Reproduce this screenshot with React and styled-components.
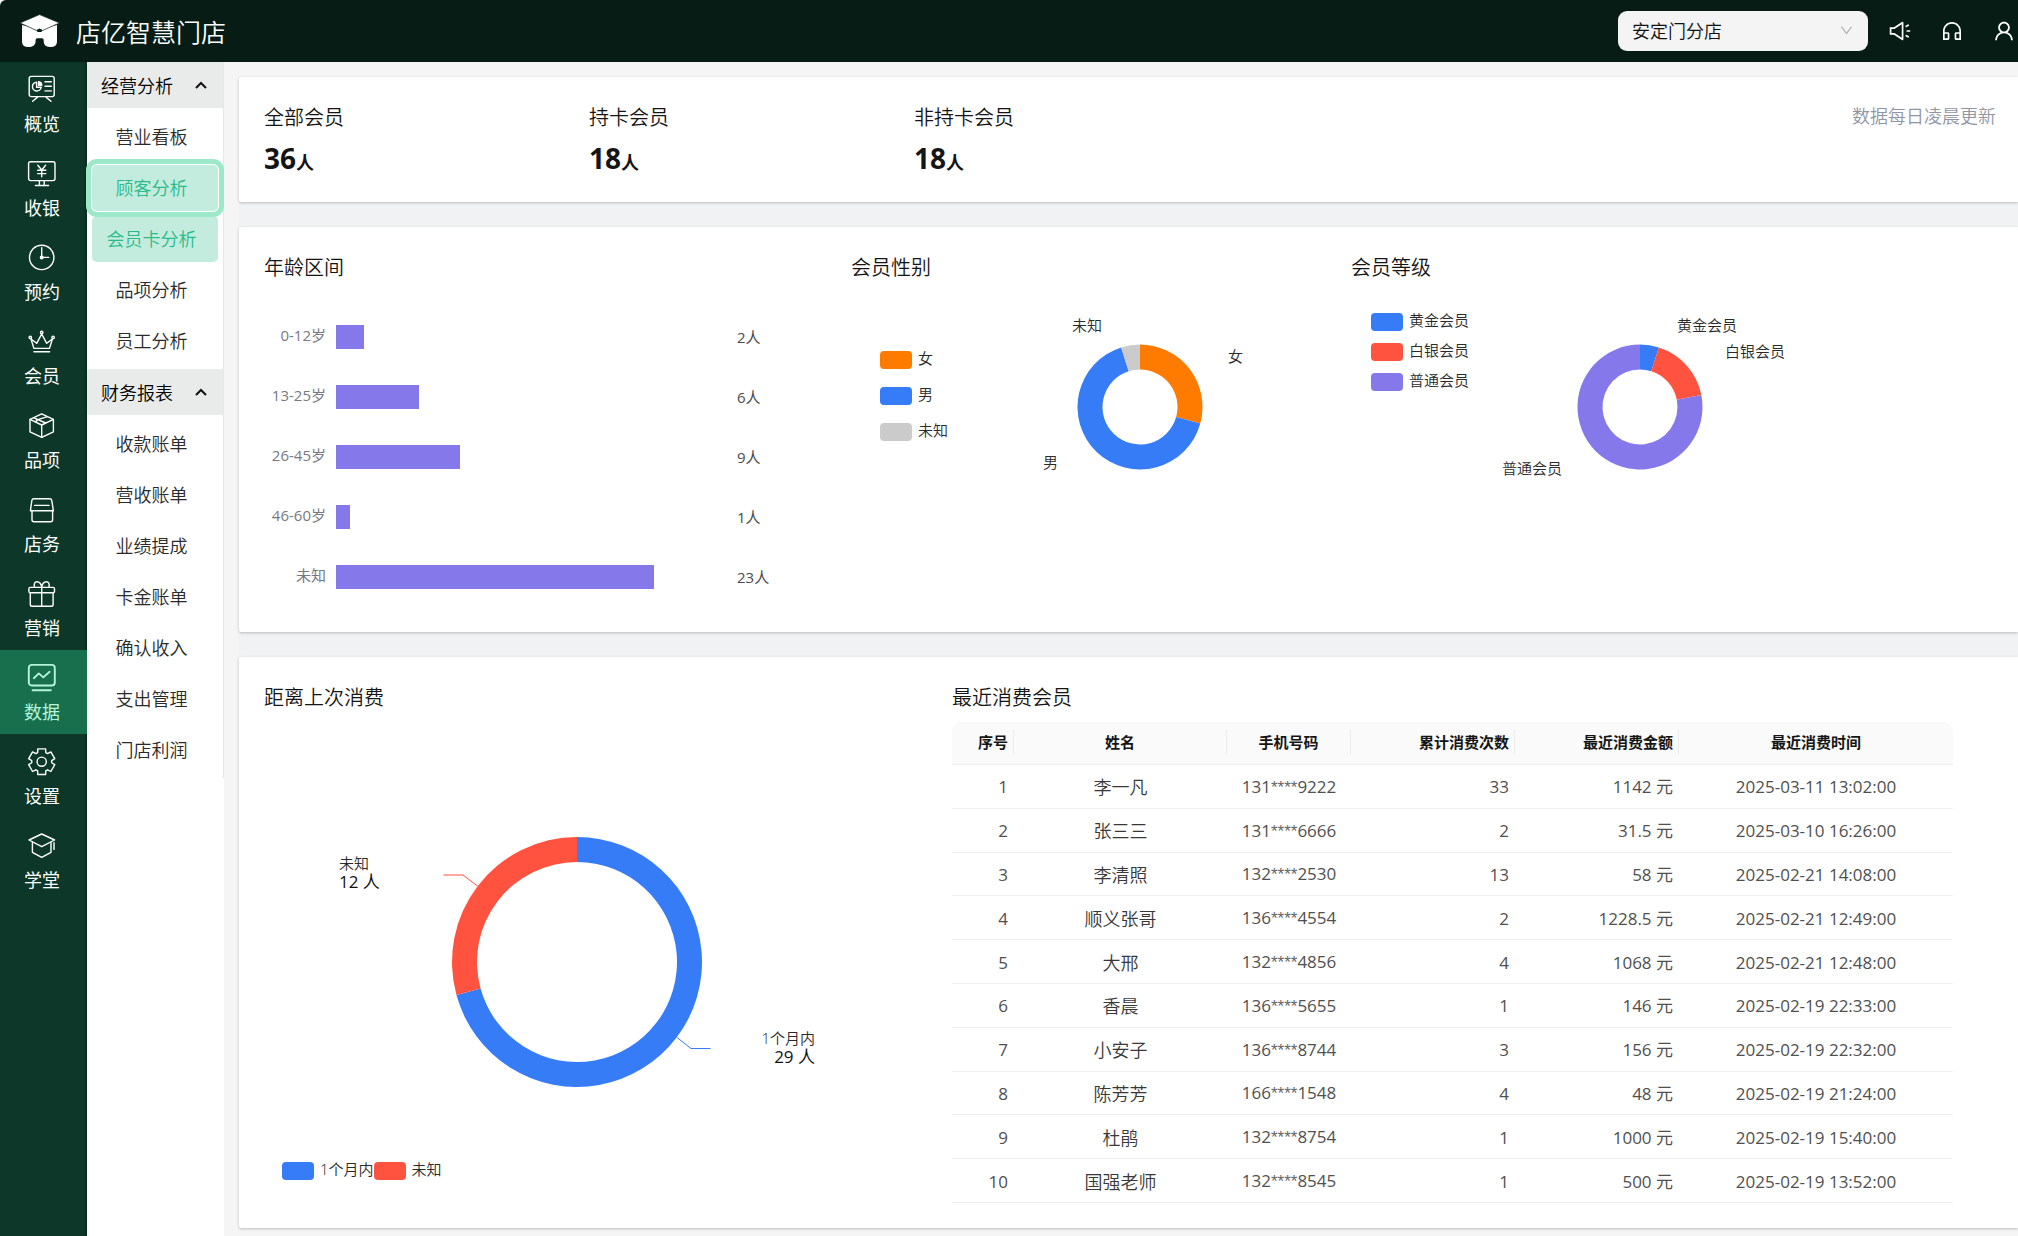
import React, { useState } from 'react';
import styled, { createGlobalStyle } from 'styled-components';
import { AiOutlineSound, AiOutlineCustomerService, AiOutlineUser, AiOutlineDown } from 'react-icons/ai';

const BLUE = '#367cf7';
const RED = '#ff5340';
const PURPLE = '#8478ea';
const ORANGE = '#ff7b00';
const GREY = '#cbcbcb';

const GlobalStyle = createGlobalStyle`
  * {
    box-sizing: border-box;
  }
  body {
    margin: 0;
    background: #f5f5f5;
    color: #151515;
    font-family: 'Open Sans', 'Noto Sans CJK SC', sans-serif;
    font-size: 18px;
    font-weight: 350;
  }
  button, select {
    font-family: inherit;
    font-weight: inherit;
  }
`;

const Page = styled.div`
  min-height: 100vh;
  display: flex;
  flex-direction: column;
  overflow-x: hidden;
`;

const Header = styled.header`
  height: 62px;
  background: #061c15;
  border-top-left-radius: 6px;
  display: flex;
  align-items: center;
  padding: 0 2px 0 20px;
`;

const Brand = styled.h1`
  margin: 2px auto 0 16px;
  color: #fff;
  font-size: 25px;
  line-height: 36px;
  font-weight: inherit;
`;

const SelectBox = styled.div`
  position: relative;
  width: 250px;
  margin-right: 20px;
  svg {
    position: absolute;
    right: 14px;
    top: 12px;
    color: #b4b4b4;
    pointer-events: none;
  }
`;

const StoreSelect = styled.select`
  display: block;
  width: 100%;
  height: 40px;
  padding: 0 40px 0 14px;
  border: none;
  border-radius: 9px;
  background: #f4f4f4;
  color: #111;
  font-size: 18px;
  appearance: none;
`;

const HeaderIcons = styled.div`
  display: flex;
  gap: 28px;
`;

const IconBtn = styled.button`
  display: flex;
  padding: 0;
  border: none;
  background: none;
  color: #fff;
  font-size: 24px;
  cursor: pointer;
`;

const Body = styled.div`
  flex: 1;
  display: flex;
`;

const SideBar = styled.nav`
  width: 87px;
  flex-shrink: 0;
  background: #0d3829;
  box-shadow: inset -3px 0 2px -1px #0a2c20;
`;

const SideItem = styled.button`
  width: 100%;
  height: 84px;
  padding: 12px 3px 9px 0;
  border: none;
  background: ${({ $active }) => ($active ? '#176f4e' : 'transparent')};
  color: ${({ $active }) => ($active ? '#b4f5d9' : '#fff')};
  display: flex;
  flex-direction: column;
  align-items: center;
  gap: 9px;
  font-size: 18px;
  line-height: 26px;
  font-weight: 400;
  cursor: pointer;
  svg {
    overflow: visible;
    fill: none;
    stroke: currentColor;
    stroke-width: 1.4;
    stroke-linejoin: round;
    stroke-linecap: round;
  }
`;

const SubMenu = styled.aside`
  width: 137px;
  flex-shrink: 0;
  background: #fff;
`;

const SubNav = styled.nav`
  border-right: 1px solid #e6e8e8;
`;

const GroupHead = styled.button`
  width: 100%;
  height: 46px;
  padding: 0 16px 0 14px;
  border: none;
  background: #e9ebea;
  color: #000;
  font-size: 18px;
  display: flex;
  align-items: center;
  justify-content: space-between;
  cursor: pointer;
`;

const GroupList = styled.div`
  display: flex;
  flex-direction: column;
  gap: 5px;
  padding: 6px 5px 5px;
`;

const SubItem = styled.a`
  position: relative;
  z-index: ${({ $focused }) => ($focused ? 1 : 0)};
  height: 46px;
  padding-right: 7px;
  border-radius: 5px;
  background: ${({ $active }) => ($active ? '#c3ecdf' : 'transparent')};
  color: ${({ $active }) => ($active ? '#2abb89' : '#2a2a2a')};
  outline: ${({ $focused }) => ($focused ? '5px solid #9de8c8' : 'none')};
  box-shadow: ${({ $focused }) => ($focused ? '0 0 0 1px #fff' : 'none')};
  outline-offset: 1px;
  line-height: 46px;
  text-align: center;
  text-decoration: none;
`;

const Main = styled.main`
  flex: 1;
  min-width: 0;
  padding: 15px 0 8px 15px;
`;

const Cards = styled.div`
  display: flex;
  flex-direction: column;
  gap: 25px;
  background: #f1f2f4;
`;

const Card = styled.section`
  padding: 25px;
  background: #fff;
  border-radius: 2px 0 0 2px;
  box-shadow: 0 1px 3px rgba(0, 0, 0, 0.24);
`;

const Title = styled.h2`
  margin: 0;
  font-size: 20px;
  line-height: 32px;
  font-weight: inherit;
`;

const StatRow = styled(Card)`
  display: flex;
  padding-right: 22px;
`;

const Stat = styled.div`
  width: 325px;
  height: 75px;
`;

const StatValue = styled.p`
  margin: 0;
  font-size: 28px;
  line-height: 48px;
  font-weight: 700;
  span {
    font-size: 18px;
  }
`;

const Note = styled.p`
  margin: 0 0 0 auto;
  color: #9095a5;
  line-height: 28px;
`;

const MemberGrid = styled(Card)`
  display: grid;
  grid-template-columns: 587fr 500fr 642fr;
`;

const RecentGrid = styled(Card)`
  display: grid;
  grid-template-columns: 688fr 1041fr;
`;

const Bars = styled.div`
  margin-top: 23px;
`;

const BarRow = styled.div`
  height: 60px;
  display: flex;
  align-items: center;
  font-size: 15px;
  line-height: 22px;
  font-weight: 400;
`;

const BarLabel = styled.span`
  width: 62px;
  margin-right: 10px;
  padding-bottom: 4px;
  color: #777982;
  text-align: right;
`;

const BarTrack = styled.div`
  flex: 1;
`;

const Bar = styled.div`
  height: 24px;
  background: ${PURPLE};
`;

const BarValue = styled.span`
  width: 114px;
  color: #4c4c4c;
`;

const PieRow = styled.div`
  display: flex;
  align-items: flex-start;
`;

const Legend = styled.ul`
  width: 129px;
  flex-shrink: 0;
  margin: 0;
  padding: ${({ $roomy }) => ($roomy ? '58px 0 0 29px' : '23px 0 0 20px')};
  list-style: none;
  li {
    height: ${({ $roomy }) => ($roomy ? 36 : 30)}px;
  }
`;

const InlineLegend = styled.ul`
  display: flex;
  margin: 0;
  padding: 4px 0 0 18px;
  list-style: none;
`;

const LegendItem = styled.li`
  display: flex;
  align-items: center;
  gap: 6px;
  color: #2a2a2a;
  font-size: 15px;
  line-height: 22px;
  white-space: nowrap;
`;

const LegendText = styled.span`
  padding-bottom: 4px;
`;

const Swatch = styled.span`
  width: 32px;
  height: 18px;
  border-radius: 4px;
  background: ${({ $color }) => $color};
`;

const Chart = styled.svg`
  display: block;
  flex-shrink: 0;
  font-size: 15px;
  fill: #2a2a2a;
`;

const Count = styled.text`
  font-size: 17px;
  font-weight: 400;
  fill: #111;
`;

const TableBox = styled.div`
  padding-right: 40px;
`;

const Table = styled.table`
  width: 100%;
  height: 481px;
  margin-top: 8px;
  table-layout: fixed;
  border-collapse: separate;
  border-spacing: 0;
`;

const Th = styled.th`
  width: ${({ $width }) => $width}px;
  height: 43px;
  padding: 0 0 2px;
  border-bottom: 1px solid #f0f0f0;
  background: #fafafa;
  font-size: 15px;
  line-height: 26px;
  text-align: ${({ $align }) => $align};
  &:first-child {
    border-top-left-radius: 9px;
  }
  &:last-child {
    border-top-right-radius: 9px;
  }
  span {
    display: block;
    padding-right: ${({ $align }) => ($align === 'right' ? 5 : 0)}px;
    border-right: 1px solid #ececec;
  }
  &:last-child span {
    border-right: none;
  }
`;

const Td = styled.td`
  padding: 2px ${({ $align }) => ($align === 'right' ? 6 : 0)}px 0 0;
  border-bottom: 1px solid #f0f0f0;
  color: ${({ $cjk }) => ($cjk ? '#383838' : '#505050')};
  font-size: ${({ $cjk }) => ($cjk ? 18 : 17)}px;
  font-weight: ${({ $cjk }) => ($cjk ? 350 : 400)};
  line-height: 26px;
  text-align: ${({ $align }) => $align};
`;

const Mask = styled.span`
  color: #666;
  font-family: 'Liberation Sans', sans-serif;
`;

// outline of the settings cog: six teeth around the centre
const cogPoints = () => {
  const pts = [];
  for (let i = 0; i < 6; i += 1) {
    [[-24, 10], [-17, 13.4], [17, 13.4], [24, 10]].forEach(([a, r]) => {
      const rad = ((i * 60 + a - 90) * Math.PI) / 180;
      pts.push(`${(13.7 + r * Math.cos(rad)).toFixed(2)},${(15.7 + r * Math.sin(rad)).toFixed(2)}`);
    });
  }
  return pts.join(' ');
};

const sideItems = [
  {
    name: '概览',
    icon: (
      <>
        <rect x="1.2" y="2.4" width="25" height="20.2" rx="2" />
        <path d="M9.3 23.4 4.6 27.2M18.3 23.4 23 27.2M17 7.8h6.3M17 12.3h6.3M17 16.9h6.3" />
        <path d="M8.6 8.2a4.4 4.4 0 1 0 4.6 5H8.6Z" />
        <path d="M10.6 7.6v3.6h3.2a3.8 3.8 0 0 0-3.2-3.6Z" fill="currentColor" />
      </>
    ),
  },
  {
    name: '收银',
    icon: (
      <>
        <rect x="0.6" y="3.8" width="26.4" height="18.8" rx="2" />
        <path d="M11.4 22.6v4.8M16.2 22.6v4.8M7.4 27.5h13.2" />
        <path d="M9.8 7.2l3.9 4.8 3.9-4.8M13.7 12v6.8M9.6 12.3h8.2M9.6 15.6h8.2" />
      </>
    ),
  },
  {
    name: '预约',
    icon: (
      <>
        <circle cx="13.7" cy="15.4" r="12.2" />
        <path d="M13.7 5.6v9.8h7" />
        <circle cx="13.7" cy="15.4" r="1.3" fill="currentColor" />
      </>
    ),
  },
  {
    name: '会员',
    icon: (
      <>
        <path d="M3 13l2.9 9.4h15.6L24.4 13l-5.7 4.3L13.7 8 8.7 17.3Z" />
        <circle cx="2.3" cy="11.4" r="1.2" />
        <circle cx="13.7" cy="6.4" r="1.2" />
        <circle cx="25.1" cy="11.4" r="1.2" />
        <path d="M6 25.7h15.6" />
      </>
    ),
  },
  {
    name: '品项',
    icon: (
      <>
        <path d="M13.7 3.8 25.4 9.4v12.4L13.7 27.4 2 21.8V9.4Z" />
        <path d="M2 9.4 13.7 15 25.4 9.4M13.7 15v12.4" />
        <path d="M6 7.8 17.6 13M8.4 12.4v-2.2L19.4 6.6" />
      </>
    ),
  },
  {
    name: '店务',
    icon: (
      <>
        <path d="M6 4.8h15.6c1.2 0 2 .6 2.2 1.8l1.6 10.2H2.4L3.8 6.6C4 5.4 4.8 4.8 6 4.8Z" />
        <path d="M6.6 11.4h14.4M4 16.8v9c0 1.2.8 2 2 2h16.6c1.2 0 2-.8 2-2v-9" />
      </>
    ),
  },
  {
    name: '营销',
    icon: (
      <>
        <rect x="0.9" y="9.4" width="25.6" height="5.4" rx="1.4" />
        <path d="M2.3 14.8v11.6c0 1.2.6 1.8 1.8 1.8h19.2c1.2 0 1.8-.6 1.8-1.8V14.8M13.7 9.4v18.8" />
        <path d="M6.6 9.2C5.4 5.6 7 3.8 9 3.8c2.4 0 4.2 2.4 4.7 5.6M20.8 9.2C22 5.6 20.4 3.8 18.4 3.8c-2.4 0-4.2 2.4-4.7 5.6" />
      </>
    ),
  },
  {
    name: '数据',
    icon: (
      <g strokeWidth="1.9">
        <rect x="0.8" y="2.9" width="26" height="20.6" rx="3" />
        <path d="M5.8 16.2 10.8 11.4 15.3 15.4 21.6 9.8M4.6 28.2h18.2" />
      </g>
    ),
  },
  {
    name: '设置',
    icon: (
      <>
        <polygon points={cogPoints()} />
        <circle cx="13.7" cy="15.7" r="4.6" />
      </>
    ),
  },
  {
    name: '学堂',
    icon: (
      <>
        <path d="M13.7 4 26.6 10 13.7 16.7 1 10Z" />
        <path d="M4.4 12v10.3l9.3 5 9.3-5V12M26 12.8v6.6" />
      </>
    ),
  },
];

const groups = [
  { name: '经营分析', items: ['营业看板', '顾客分析', '会员卡分析', '品项分析', '员工分析'] },
  { name: '财务报表', items: ['收款账单', '营收账单', '业绩提成', '卡金账单', '确认收入', '支出管理', '门店利润'] },
];

const stats = [
  { label: '全部会员', value: 36 },
  { label: '持卡会员', value: 18 },
  { label: '非持卡会员', value: 18 },
];

const ages = [
  { label: '0-12岁', value: 2 },
  { label: '13-25岁', value: 6 },
  { label: '26-45岁', value: 9 },
  { label: '46-60岁', value: 1 },
  { label: '未知', value: 23 },
];

const AXIS_MAX = 29;

const genders = [
  { name: '女', value: 12, color: ORANGE, x: 248, y: 78 },
  { name: '男', value: 27, color: BLUE, x: 63, y: 184 },
  { name: '未知', value: 2, color: GREY, x: 92, y: 47 },
];

const levels = [
  { name: '黄金会员', value: 2, color: BLUE, x: 197, y: 47 },
  { name: '白银会员', value: 7, color: RED, x: 245, y: 73 },
  { name: '普通会员', value: 32, color: PURPLE, x: 22, y: 190 },
];

const lastVisit = [
  { name: '1个月内', value: 29, color: BLUE },
  { name: '未知', value: 12, color: RED },
];

const columns = [
  { title: '序号', width: 62, align: 'right' },
  { title: '姓名', width: 213, align: 'center' },
  { title: '手机号码', width: 124, align: 'center' },
  { title: '累计消费次数', width: 164, align: 'right' },
  { title: '最近消费金额', width: 164, align: 'right' },
  { title: '最近消费时间', width: 274, align: 'center' },
];

const members = [
  ['李一凡', '131', '9222', 33, '1142', '2025-03-11 13:02:00'],
  ['张三三', '131', '6666', 2, '31.5', '2025-03-10 16:26:00'],
  ['李清照', '132', '2530', 13, '58', '2025-02-21 14:08:00'],
  ['顺义张哥', '136', '4554', 2, '1228.5', '2025-02-21 12:49:00'],
  ['大邢', '132', '4856', 4, '1068', '2025-02-21 12:48:00'],
  ['香晨', '136', '5655', 1, '146', '2025-02-19 22:33:00'],
  ['小安子', '136', '8744', 3, '156', '2025-02-19 22:32:00'],
  ['陈芳芳', '166', '1548', 4, '48', '2025-02-19 21:24:00'],
  ['杜鹃', '132', '8754', 1, '1000', '2025-02-19 15:40:00'],
  ['国强老师', '132', '8545', 1, '500', '2025-02-19 13:52:00'],
];

function Logo() {
  return (
    <svg width="40" height="34" viewBox="0 0 40 34" aria-hidden="true">
      <path
        fill="#fff"
        d="M2 11 19.5 15 37 11V27.5Q37 33 30.5 33 24 33 23.7 28V26Q23.7 24.3 22 24.3H17.3Q15.6 24.3 15.6 26V28Q15 33 8.5 33 2 33 2 27.5Z"
      />
      <path fill="#fff" stroke="#061c15" strokeWidth="0.7" d="M19.5 0.6 39.6 8.9 21 17.2H18L0 8.9Z" />
      <path fill="#061c15" d="M19.5 14.4l2.6 1.4-.6 2.2h-4l-.6-2.2Z" />
    </svg>
  );
}

function Chevron() {
  return (
    <svg width="12" height="8" viewBox="0 0 12 8" fill="none" stroke="#111" strokeWidth="2">
      <path d="M1 7 6 2l5 5" />
    </svg>
  );
}

function Donut({ data, cx, cy, outer, inner }) {
  const total = data.reduce((sum, d) => sum + d.value, 0);
  const at = (angle, r) => `${cx + r * Math.sin(angle)} ${cy - r * Math.cos(angle)}`;
  let start = 0;
  return data.map((d) => {
    const end = start + (d.value / total) * Math.PI * 2;
    const large = end - start > Math.PI ? 1 : 0;
    const path = `M${at(start, outer)}A${outer} ${outer} 0 ${large} 1 ${at(end, outer)}L${at(end, inner)}A${inner} ${inner} 0 ${large} 0 ${at(start, inner)}Z`;
    start = end;
    return <path key={d.name} d={path} fill={d.color} />;
  });
}

function LegendEntry({ item }) {
  return (
    <LegendItem>
      <Swatch $color={item.color} />
      <LegendText>{item.name}</LegendText>
    </LegendItem>
  );
}

function PiePanel({ title, data, roomy }) {
  return (
    <div>
      <Title>{title}</Title>
      <PieRow>
        <Legend $roomy={roomy}>
          {data.map((d) => <LegendEntry key={d.name} item={d} />)}
        </Legend>
        <Chart width="320" height="240" viewBox="0 0 320 240">
          <Donut data={data} cx={160} cy={123} outer={62.5} inner={37.5} />
          {data.map((d) => <text key={d.name} x={d.x} y={d.y}>{d.name}</text>)}
        </Chart>
      </PieRow>
    </div>
  );
}

function App() {
  const [section, setSection] = useState('数据');

  return (
    <Page>
      <GlobalStyle />
      <Header>
        <Logo />
        <Brand>店亿智慧门店</Brand>
        <SelectBox>
          <StoreSelect aria-label="门店" defaultValue="安定门分店">
            <option>安定门分店</option>
          </StoreSelect>
          <AiOutlineDown size={15} />
        </SelectBox>
        <HeaderIcons>
          <IconBtn aria-label="公告"><AiOutlineSound /></IconBtn>
          <IconBtn aria-label="客服"><AiOutlineCustomerService /></IconBtn>
          <IconBtn aria-label="账号"><AiOutlineUser /></IconBtn>
        </HeaderIcons>
      </Header>
      <Body>
        <SideBar>
          {sideItems.map((item) => (
            <SideItem key={item.name} $active={item.name === section} onClick={() => setSection(item.name)}>
              <svg width="28" height="28" viewBox="0 0 28 28">{item.icon}</svg>
              {item.name}
            </SideItem>
          ))}
        </SideBar>
        <SubMenu>
          <SubNav>
            {groups.map((group) => (
              <div key={group.name}>
                <GroupHead>
                  {group.name}
                  <Chevron />
                </GroupHead>
                <GroupList>
                  {group.items.map((name) => (
                    <SubItem
                      key={name}
                      href="#"
                      $active={name === '顾客分析' || name === '会员卡分析'}
                      $focused={name === '顾客分析'}
                    >
                      {name}
                    </SubItem>
                  ))}
                </GroupList>
              </div>
            ))}
          </SubNav>
        </SubMenu>
        <Main>
          <Cards>
            <StatRow>
              {stats.map((s) => (
                <Stat key={s.label}>
                  <Title>{s.label}</Title>
                  <StatValue>{s.value}<span>人</span></StatValue>
                </Stat>
              ))}
              <Note>数据每日凌晨更新</Note>
            </StatRow>

            <MemberGrid>
              <div>
                <Title>年龄区间</Title>
                <Bars>
                  {ages.map((a) => (
                    <BarRow key={a.label}>
                      <BarLabel>{a.label}</BarLabel>
                      <BarTrack>
                        <Bar style={{ width: `${(a.value / AXIS_MAX) * 100}%` }} />
                      </BarTrack>
                      <BarValue>{a.value}人</BarValue>
                    </BarRow>
                  ))}
                </Bars>
              </div>
              <PiePanel title="会员性别" data={genders} roomy />
              <PiePanel title="会员等级" data={levels} />
            </MemberGrid>

            <RecentGrid>
              <div>
                <Title>距离上次消费</Title>
                <Chart width="600" height="440" viewBox="0 0 600 440">
                  <Donut data={lastVisit} cx={313} cy={248} outer={125} inner={100} />
                  <path d="M213.5 172 199 161H179.5" fill="none" stroke={RED} />
                  <path d="M413 323.5 427 334.5H446.5" fill="none" stroke={BLUE} />
                  <text x="75" y="155">未知</text>
                  <Count x="75" y="174">12 人</Count>
                  <text x="551" y="330" textAnchor="end">1个月内</text>
                  <Count x="551" y="349" textAnchor="end">29 人</Count>
                </Chart>
                <InlineLegend>
                  {lastVisit.map((d) => <LegendEntry key={d.name} item={d} />)}
                </InlineLegend>
              </div>
              <TableBox>
                <Title>最近消费会员</Title>
                <Table>
                  <thead>
                    <tr>
                      {columns.map((c) => (
                        <Th key={c.title} $width={c.width} $align={c.align}><span>{c.title}</span></Th>
                      ))}
                    </tr>
                  </thead>
                  <tbody>
                    {members.map(([name, head, tail, count, amount, time], i) => (
                      <tr key={name}>
                        <Td $align="right">{i + 1}</Td>
                        <Td $align="center" $cjk>{name}</Td>
                        <Td $align="center">{head}<Mask>****</Mask>{tail}</Td>
                        <Td $align="right">{count}</Td>
                        <Td $align="right">{amount} 元</Td>
                        <Td $align="center">{time}</Td>
                      </tr>
                    ))}
                  </tbody>
                </Table>
              </TableBox>
            </RecentGrid>
          </Cards>
        </Main>
      </Body>
    </Page>
  );
}

export default App;
